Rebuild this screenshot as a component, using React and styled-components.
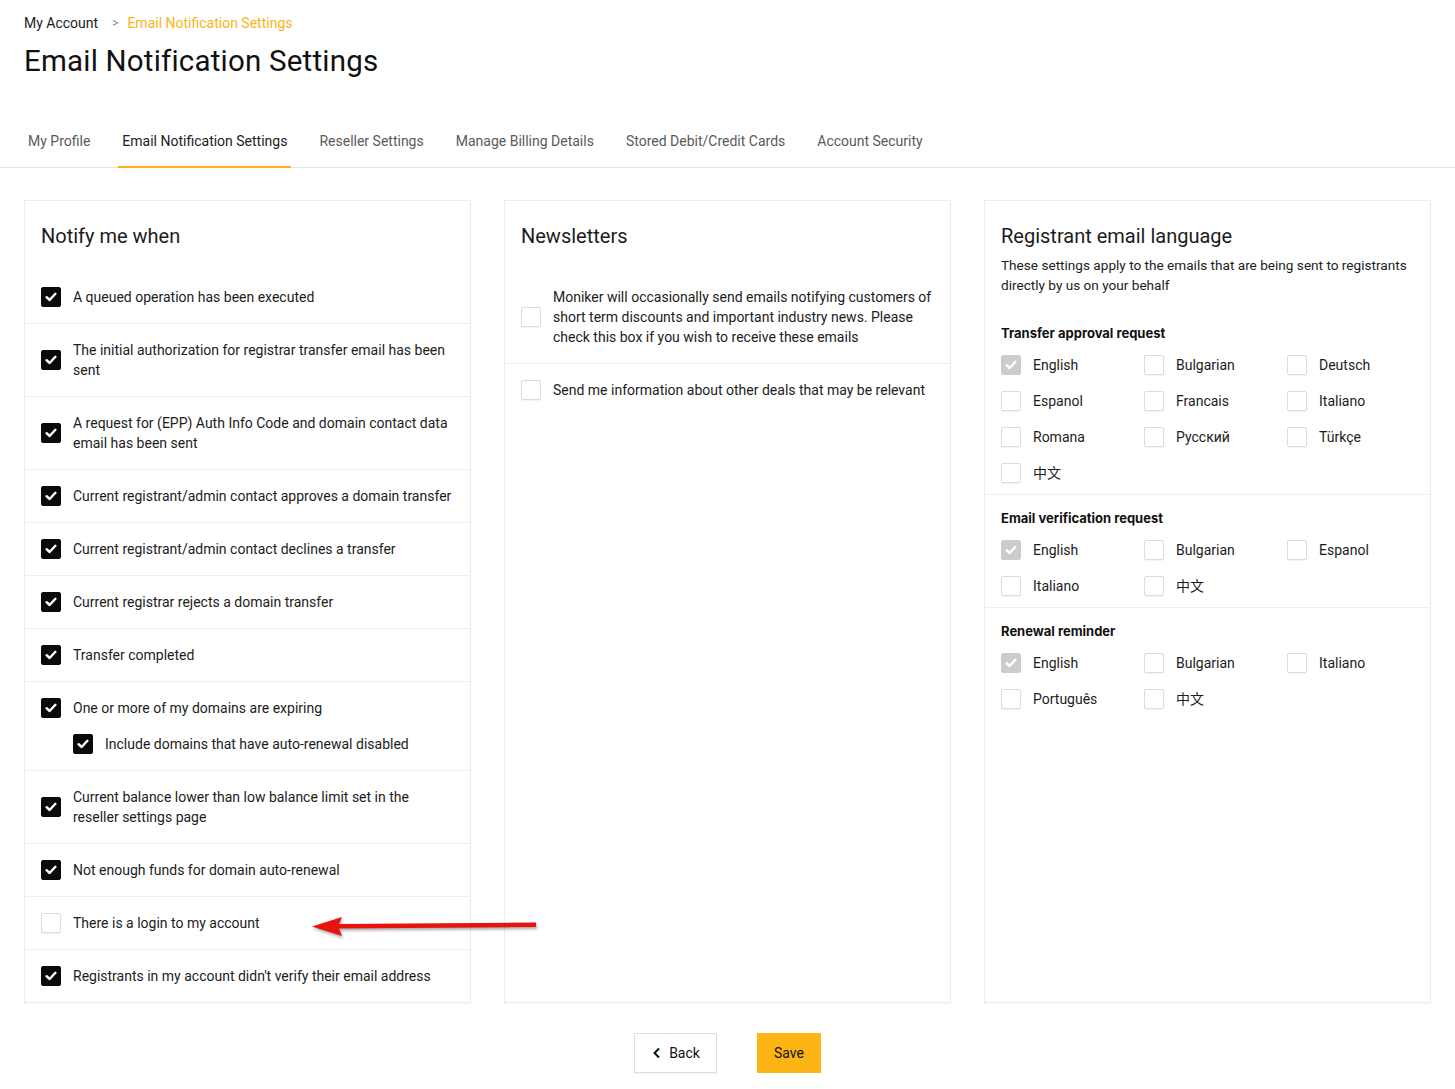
import React from 'react'
import styled, { createGlobalStyle } from 'styled-components'

const Global = createGlobalStyle`
  body {
    margin: 0;
    background: #fff;
    font-family: Roboto, "Liberation Sans", Arial, sans-serif;
    color: #1c1c1c;
  }
`

const Page = styled.div`
  position: relative;
  width: 1455px;
`

const Header = styled.div`
  padding: 13px 24px 0;
`

const Crumbs = styled.div`
  display: flex;
  align-items: center;
  font-size: 14px;
  line-height: 20px;
  color: #1c1c1c;
`

const CrumbSep = styled.span`
  margin: 0 9px 0 14px;
  color: #888;
  font-size: 12px;
`

const CrumbActive = styled.span`
  color: #f9b41d;
`

const Title = styled.h1`
  margin: 10px 0 0;
  font-size: 29.5px;
  line-height: 36px;
  font-weight: 400;
  color: #111;
  letter-spacing: 0.2px;
`

const TabBar = styled.div`
  display: flex;
  margin-top: 52px;
  padding: 0 24px;
  border-bottom: 1px solid #e3e3e3;
`

const Tab = styled.div`
  padding: 0 4px 15px;
  margin-right: 24px;
  margin-bottom: -1px;
  font-size: 14px;
  line-height: 20px;
  color: ${p => (p.$active ? '#1c1c1c' : '#5a5a5a')};
  border-bottom: 2px solid ${p => (p.$active ? '#fdb515' : 'transparent')};
`

const Main = styled.div`
  display: grid;
  grid-template-columns: repeat(3, 447px);
  gap: 33px;
  padding: 32px 24px 0;
`

const Card = styled.div`
  border: 1px solid #ececec;
  box-shadow: 0 1px 2px rgba(0, 0, 0, 0.04);
  background: #fff;
`

const CardHead = styled.div`
  padding: 23px 16px ${p => p.$bottom ?? 23}px;
`

const CardTitle = styled.h2`
  margin: 0;
  font-size: 20px;
  line-height: 24px;
  font-weight: 400;
  color: #1c1c1c;
`

const CardDesc = styled.p`
  margin: 7px 0 0;
  font-size: 13.6px;
  line-height: 20px;
  color: #1c1c1c;
`

const Row = styled.div`
  padding: 16px 16px;
  border-bottom: 1px solid #eeeeee;
  &:last-child {
    border-bottom: none;
  }
`

const Line = styled.label`
  display: flex;
  align-items: center;
  gap: 12px;
  font-size: 14px;
  line-height: 20px;
  color: #1c1c1c;
  padding-left: ${p => (p.$nested ? 32 : 0)}px;
  margin-top: ${p => (p.$nested ? 16 : 0)}px;
`

const Box = styled.span`
  flex: 0 0 20px;
  width: 20px;
  height: 20px;
  box-sizing: border-box;
  border-radius: 2px;
  display: inline-flex;
  align-items: center;
  justify-content: center;
  background: ${p => (p.$state === 'on' ? '#0a0a0a' : p.$state === 'locked' ? '#cccccc' : '#fff')};
  border: 1px solid ${p => (p.$state === 'on' ? '#0a0a0a' : p.$state === 'locked' ? '#cccccc' : '#dcdcdc')};
  box-shadow: ${p => (p.$state === 'off' ? '0 1px 1px rgba(0,0,0,0.05)' : 'none')};
`

const Section = styled.div`
  padding: 13px 16px 11px;
  border-bottom: 1px solid ${p => (p.$last ? 'transparent' : '#eeeeee')};
`

const SectionTitle = styled.div`
  font-family: Inter, Roboto, sans-serif;
  font-size: 13px;
  line-height: 20px;
  font-weight: 700;
  color: #111;
  margin-bottom: 12px;
`

const LangGrid = styled.div`
  display: grid;
  grid-template-columns: repeat(3, 143px);
  row-gap: 16px;
`

const Lang = styled.label`
  display: flex;
  align-items: center;
  gap: 12px;
  font-size: 14px;
  line-height: 20px;
  color: #1c1c1c;
  font-family: Roboto, "Noto Sans CJK SC", sans-serif;
`

const Footer = styled.div`
  display: flex;
  justify-content: center;
  gap: 40px;
  margin-top: 30px;
  padding-bottom: 16px;
`

const Button = styled.button`
  height: 40px;
  padding: 0 16px;
  display: inline-flex;
  align-items: center;
  gap: 6px;
  font-family: Roboto, sans-serif;
  font-size: 14px;
  color: #111;
  background: ${p => (p.$primary ? '#fdb515' : '#fff')};
  border: 1px solid ${p => (p.$primary ? '#fdb515' : '#dedede')};
  box-shadow: ${p => (p.$primary ? 'none' : '0 1px 2px rgba(0,0,0,0.06)')};
  border-radius: 0;
`

const Arrow = styled.svg`
  position: absolute;
  left: 308px;
  top: 910px;
  filter: drop-shadow(1px 2px 1.5px rgba(0, 0, 0, 0.35));
`

function Check({ state }) {
  return (
    <Box $state={state}>
      {state !== 'off' && (
        <svg width="12" height="10" viewBox="0 0 12 10">
          <path d="M1.6 5.2 L4.6 8 L10.4 1.8" fill="none" stroke="#fff" strokeWidth="2.4" strokeLinecap="round" strokeLinejoin="round" />
        </svg>
      )}
    </Box>
  )
}

const notify = [
  { t: 'A queued operation has been executed', on: true },
  { t: 'The initial authorization for registrar transfer email has been sent', on: true },
  { t: 'A request for (EPP) Auth Info Code and domain contact data email has been sent', on: true },
  { t: 'Current registrant/admin contact approves a domain transfer', on: true },
  { t: 'Current registrant/admin contact declines a transfer', on: true },
  { t: 'Current registrar rejects a domain transfer', on: true },
  { t: 'Transfer completed', on: true },
  { t: 'One or more of my domains are expiring', on: true, sub: 'Include domains that have auto-renewal disabled' },
  { t: 'Current balance lower than low balance limit set in the reseller settings page', on: true },
  { t: 'Not enough funds for domain auto-renewal', on: true },
  { t: 'There is a login to my account', on: false },
  { t: "Registrants in my account didn't verify their email address", on: true },
]

const sections = [
  {
    title: 'Transfer approval request',
    langs: ['English', 'Bulgarian', 'Deutsch', 'Espanol', 'Francais', 'Italiano', 'Romana', 'Русский', 'Türkçe', '中文'],
  },
  { title: 'Email verification request', langs: ['English', 'Bulgarian', 'Espanol', 'Italiano', '中文'] },
  { title: 'Renewal reminder', langs: ['English', 'Bulgarian', 'Italiano', 'Português', '中文'] },
]

const tabs = ['My Profile', 'Email Notification Settings', 'Reseller Settings', 'Manage Billing Details', 'Stored Debit/Credit Cards', 'Account Security']

export default function App() {
  return (
    <Page>
      <Global />
      <Header>
        <Crumbs>
          My Account
          <CrumbSep>&gt;</CrumbSep>
          <CrumbActive>Email Notification Settings</CrumbActive>
        </Crumbs>
        <Title>Email Notification Settings</Title>
      </Header>
      <TabBar>
        {tabs.map(t => (
          <Tab key={t} $active={t === 'Email Notification Settings'}>{t}</Tab>
        ))}
      </TabBar>

      <Main>
        <Card>
          <CardHead>
            <CardTitle>Notify me when</CardTitle>
          </CardHead>
          {notify.map(n => (
            <Row key={n.t}>
              <Line>
                <Check state={n.on ? 'on' : 'off'} />
                <span>{n.t}</span>
              </Line>
              {n.sub && (
                <Line $nested>
                  <Check state="on" />
                  <span>{n.sub}</span>
                </Line>
              )}
            </Row>
          ))}
        </Card>

        <Card>
          <CardHead>
            <CardTitle>Newsletters</CardTitle>
          </CardHead>
          <Row>
            <Line>
              <Check state="off" />
              <span>Moniker will occasionally send emails notifying customers of short term discounts and important industry news. Please check this box if you wish to receive these emails</span>
            </Line>
          </Row>
          <Row>
            <Line>
              <Check state="off" />
              <span>Send me information about other deals that may be relevant</span>
            </Line>
          </Row>
        </Card>

        <Card>
          <CardHead $bottom={15}>
            <CardTitle>Registrant email language</CardTitle>
            <CardDesc>These settings apply to the emails that are being sent to registrants directly by us on your behalf</CardDesc>
          </CardHead>
          {sections.map((s, i) => (
            <Section key={s.title} $last={i === sections.length - 1}>
              <SectionTitle>{s.title}</SectionTitle>
              <LangGrid>
                {s.langs.map(l => (
                  <Lang key={l}>
                    <Check state={l === 'English' ? 'locked' : 'off'} />
                    {l}
                  </Lang>
                ))}
              </LangGrid>
            </Section>
          ))}
        </Card>
      </Main>

      <Footer>
        <Button>
          <svg width="12" height="12" viewBox="0 0 12 12">
            <path d="M8 1.5 L3.5 6 L8 10.5" fill="none" stroke="#111" strokeWidth="2" />
          </svg>
          Back
        </Button>
        <Button $primary>Save</Button>
      </Footer>

      <Arrow width="232" height="30" viewBox="0 0 232 30">
        <polygon points="4,16.5 34,7 31,14 228,12.5 228,17 31,18.5 34,26" fill="#e8130d" />
      </Arrow>
    </Page>
  )
}
